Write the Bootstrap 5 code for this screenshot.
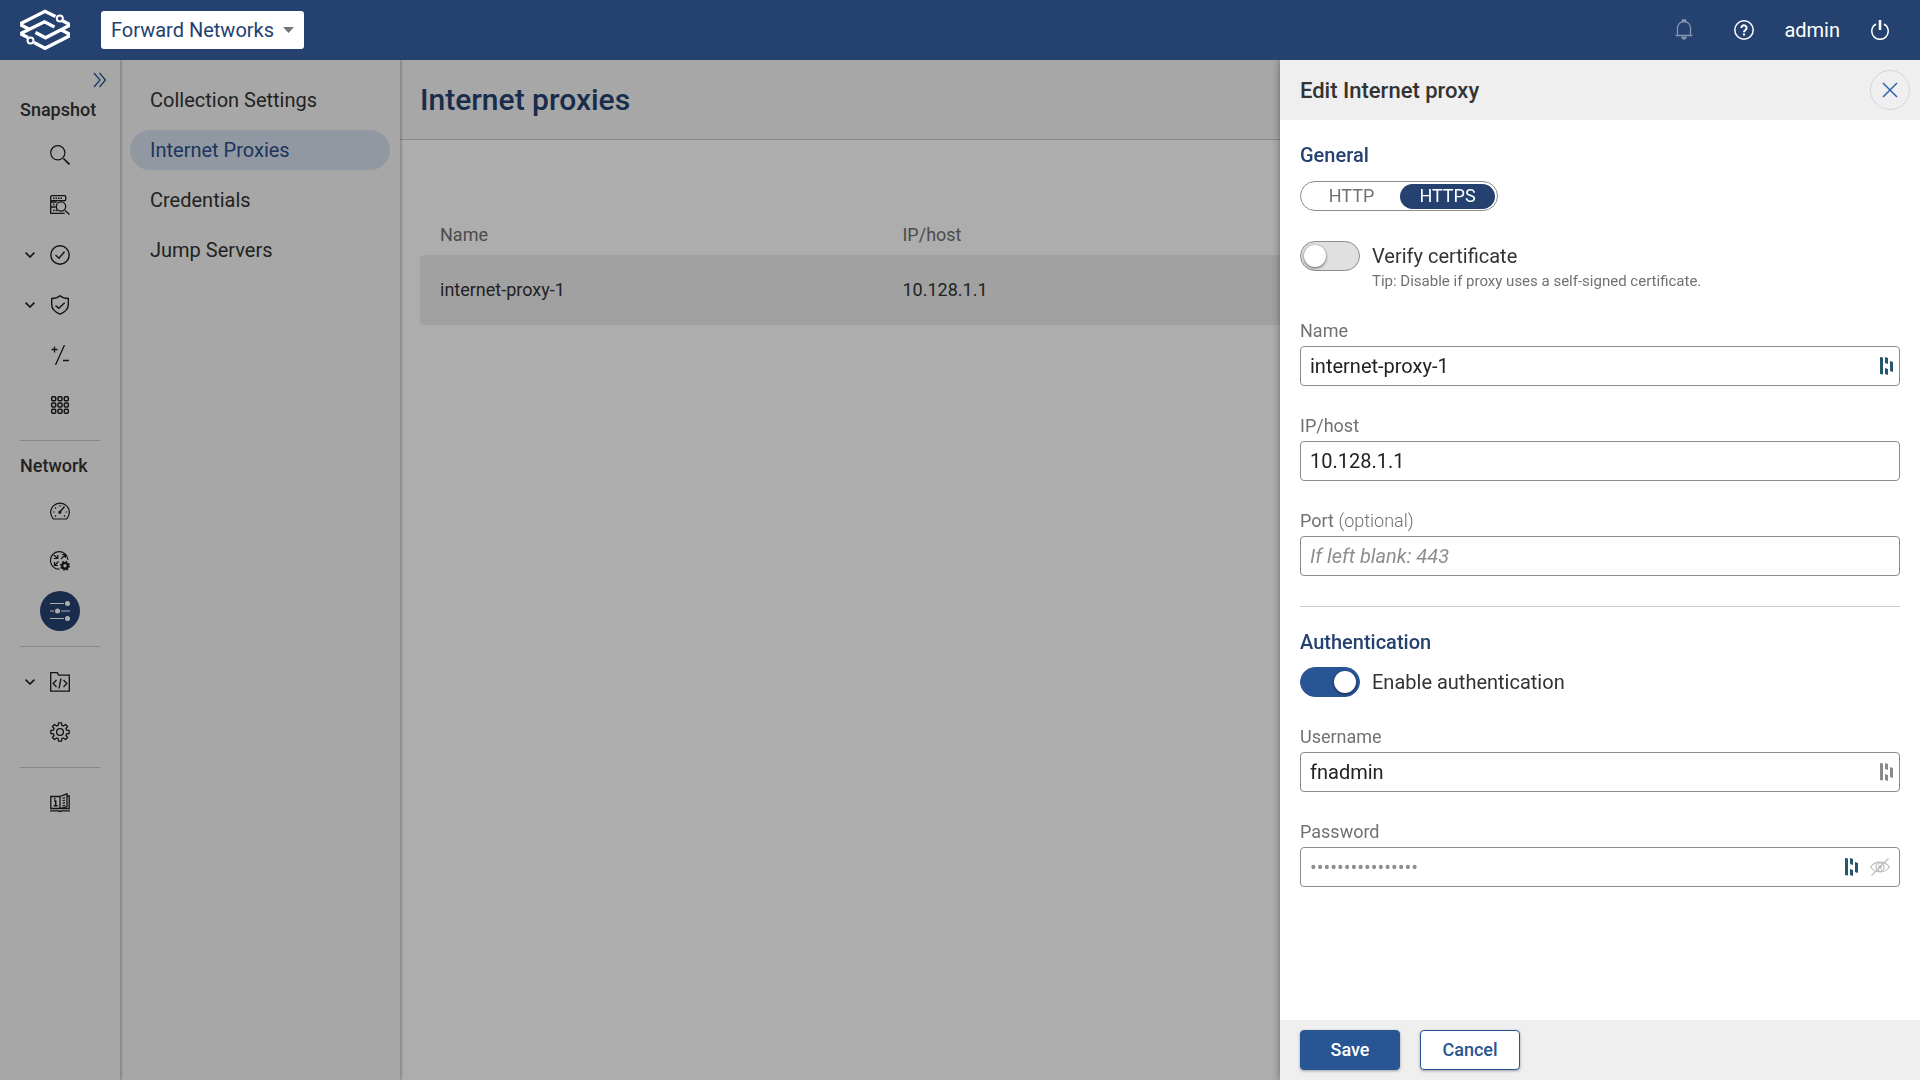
<!DOCTYPE html>
<html lang="en">
<head>
<meta charset="utf-8">
<meta name="viewport" content="width=device-width, initial-scale=1">
<title>Internet proxies</title>
<link href="https://cdn.jsdelivr.net/npm/bootstrap@5.3.0/dist/css/bootstrap.min.css" rel="stylesheet">
<style>
:root{--navy:#254170;--blue:#285593;--ink:#333;--soft:#717171}
body{font-family:Roboto,"Liberation Sans",sans-serif;font-size:20px;line-height:24px;color:var(--ink);background:#fff}
svg{display:block;fill:none;stroke:currentColor;flex:none}
.topbar{height:60px;background:var(--navy);color:#fff;padding:0 30px 0 20px;z-index:1050}
.net-select{width:203px;height:38px;margin-left:31px;border:0;border-radius:3px;color:var(--navy);font-size:20px;padding:0 28px 0 10px;
 background:#fff url("data:image/svg+xml,%3Csvg xmlns='http://www.w3.org/2000/svg' viewBox='0 0 11 6'%3E%3Cpath d='M0 0h11L5.5 6z' fill='%23757575'/%3E%3C/svg%3E") no-repeat right 10px center/11px 6px}
.bar-tools{gap:30px}
.bar-btn{background:none;border:0;padding:0;color:#fff;line-height:24px}
.bar-btn.quiet{opacity:.45;margin-right:10px}
.rail{width:120px;background:#f7f7f7;box-shadow:1px 0 3px rgba(0,0,0,.3);z-index:2}
.rail-toggle{height:40px;padding:0 13px 0 0;background:none;border:0;color:var(--blue)}
.rail-title{height:20px;line-height:20px;font-size:18px;font-weight:500;padding-left:20px;margin:0 0 10px;color:var(--ink)}
.rail a{height:50px;color:#1c1c1c;text-decoration:none;padding-left:25px;display:flex;align-items:center}
.rail .twist{width:10px;margin-right:10px}
.rail .glyph{width:40px;height:40px;display:grid;place-items:center;margin-left:-5px;border-radius:50%}
.rail .current .glyph{background:var(--navy);color:#fff}
.rail hr{margin:10px 20px;border-top:1px solid #c8c8c8;opacity:1}
.rail hr + .rail-title{margin-top:5px}
.subnav{width:280px;gap:10px;background:#f7f7f7;box-shadow:1px 0 3px rgba(0,0,0,.3);padding:20px 10px;z-index:1}
.subnav .nav-link{height:40px;line-height:40px;padding:0 20px;border-radius:20px;color:var(--ink)}
.subnav .nav-link.active{background:#d8e1ee;color:#2c4f88}
.page-head{height:80px;background:#f7f7f7;border-bottom:1px solid #ccc;padding:0 20px}
.page-head h1{font-size:30px;font-weight:500;color:var(--navy)}
.list-area{padding:75px 20px 20px}
.proxy-table{table-layout:fixed;font-size:18px;line-height:20px;border-collapse:separate;border-spacing:0;width:100%}
.proxy-table th{font-weight:400;color:#717171;padding:10px 20px}
.proxy-table td{background:#eee;height:70px;padding:0 20px}
.proxy-table td:first-child{border-radius:4px 0 0 4px}
.proxy-table td:last-child{border-radius:0 4px 4px 0}
.shade{background:rgba(0,0,0,.32);z-index:10}
.editor.offcanvas{top:60px;width:640px;max-width:100%;border:0;background:#fff;color:var(--ink);box-shadow:0 0 8px rgba(0,0,0,.4)}
.editor-head{height:60px;background:#efefef;padding:0 10px 0 20px}
.editor-head h2{font-size:22px;font-weight:500;line-height:25px}
.close-round{width:40px;height:40px;border:1px solid #d3d3df;border-radius:50%;background:none;color:#2f63b0;padding:0;display:grid;place-items:center}
.editor-body{padding:23px 20px}
.editor-body h3{font-size:20px;font-weight:500;line-height:24px;color:var(--navy);margin:0}
.scheme{height:30px;margin-top:14px;vertical-align:top;border:1px solid #8c8c8c;border-radius:15px;padding:1px 2px 0}
.scheme .btn{width:97px;height:25px;line-height:24px;font-size:18px;padding:0;border:0;border-radius:13px!important;color:var(--soft);margin:0!important;flex:none}
.scheme .btn-check:checked + .btn{background:var(--navy);color:#fff;width:95px}
.form-switch.toggle-row{padding:0;min-height:0;margin:0;gap:12px}
.form-switch.toggle-row.verify{margin:30px 0}
.form-switch.toggle-row.auth{margin:13px 0 30px}
.toggle-row .form-check-input{width:60px;height:30px;margin:0;float:none;border:1px solid #8c8c8c;border-radius:15px;background:#e0e0e0;flex:none;display:flex;align-items:center;padding:0 3px}
.toggle-row .form-check-input::before{content:"";width:22px;height:22px;border-radius:50%;background:#fff;box-shadow:0 1px 3px rgba(0,0,0,.6)}
.toggle-row .form-check-input:checked{background:var(--blue);border-color:var(--blue);justify-content:flex-end}
.verify-label{line-height:30px}
.tip{font-size:15px;line-height:20px;color:var(--soft)}
.field-label{font-size:18px;line-height:20px;margin:0 0 5px;display:block;color:var(--soft)}
.field{margin-bottom:30px}
.box{height:40px;border:1px solid #8c8c8c;border-radius:4px;background:#fff}
.box .form-control{border:0;background:none;padding:0 9px;font-size:20px;line-height:24px;height:38px;color:#222;box-shadow:none}
.box .form-control::placeholder{color:#8e8e8e;opacity:1}
.box .port::placeholder{font-style:italic}
.box svg{margin-right:6px}
.eye{background:none;border:0;padding:0 3px 0 6px;color:#bdbdbd}
.key{color:#26566d;fill:currentColor;stroke:none}
.key.dim{color:#8d8986}
.editor hr{margin:0 0 23px;border-top:1px solid #ccc;opacity:1}
.editor-foot{height:60px;background:#efefef;padding:0 20px;gap:20px}
.editor-foot .btn{width:100px;height:40px;font-size:18px;line-height:20px;font-weight:500;padding:0;border:1px solid var(--blue);border-radius:4px;box-shadow:0 1px 3px rgba(0,0,0,.35)}
.act-save{background:var(--blue);color:#fff}
.act-cancel{background:#fff;color:var(--blue)}
</style>
</head>
<body class="d-flex flex-column min-vh-100">
<header class="topbar d-flex align-items-center position-relative">
  <svg width="50" height="42" viewBox="0 0 50 42" stroke-width="3.4" role="img" aria-label="Forward Networks">
    <path d="M35.500 7.500 25 2.300 1.800 14V16.500L9.500 20.300"/><path d="M42 11.500 48.300 14.800V17L25.500 28.800 15.500 23.500"/>
    <path d="M8 28.500 1.800 25.500V24L24.500 12.800 34.500 18"/><path d="M40.500 20.500 48.300 24.500V27.500L25 39.300 14 33.500"/>
    <circle cx="39.800" cy="9.500" r="3" stroke-width="2"/><circle cx="10.500" cy="31.500" r="3" stroke-width="2"/>
  </svg>
  <select class="net-select form-select" aria-label="Network"><option>Forward Networks</option></select>
  <div class="bar-tools ms-auto d-flex align-items-center">
    <button class="bar-btn quiet" aria-label="Notifications"><svg width="20" height="22" viewBox="0 0 20 22" stroke-width="1.300"><path d="M1.500 16.500h17M3.500 16.500V9a6.500 6.500 0 0 1 13 0v7.500M8.500 2.500V1h3v1.500M8 18.500a2 1.500 0 0 0 4 0z"/></svg></button>
    <button class="bar-btn" aria-label="Help"><svg width="20" height="20" viewBox="0 0 20 20" stroke-width="1.500"><circle cx="10" cy="10" r="9.200"/><path d="M7.400 8a2.600 2.600 0 1 1 4 2.100C10.400 10.700 10 11 10 12.300M10 13.500v2" stroke-width="2"/></svg></button>
    <button class="bar-btn">admin</button>
    <button class="bar-btn" aria-label="Sign out"><svg width="20" height="20" viewBox="0 0 20 20" stroke-width="1.500"><path d="M6 4a8.200 8.200 0 1 0 8 0"/><path d="M10 0v10" stroke-width="2.600"/></svg></button>
  </div>
</header>
<div class="flex-grow-1 d-flex position-relative">
  <nav class="rail flex-shrink-0 d-flex flex-column" aria-label="Main">
    <button class="rail-toggle d-flex justify-content-end align-items-center" aria-label="Expand"><svg width="14" height="16" viewBox="0 0 14 16" stroke-width="1.300"><path d="M1 1l6 7-6 7M6.500 1l6 7-6 7"/></svg></button>
    <h2 class="rail-title">Snapshot</h2>
    <a href="#" aria-label="Search"><span class="twist"></span><span class="glyph"><svg width="20" height="20" viewBox="0 0 20 20" stroke-width="1.200"><circle cx="7.800" cy="7.800" r="7.100"/><path d="M13.500 13.500l6 6" stroke-width="1.700"/></svg></span></a>
    <a href="#" aria-label="Inventory search"><span class="twist"></span><span class="glyph"><svg width="20" height="20" viewBox="0 0 20 20" stroke-width="1.300"><rect x=".7" y=".7" width="15" height="5" rx="1"/><path d="M.7 5.700v12.600h14M.7 12h5M.7 7h6"/><path d="M3 3.200h10M3 9.500h2M3 15.500h4" stroke-width="1.500" stroke-dasharray="1.500 1"/><circle cx="11" cy="11.500" r="4.700"/><path d="M15 15.500l4.500 4"/></svg></span></a>
    <a href="#" aria-label="Verify"><span class="twist"><svg width="10" height="6" viewBox="0 0 10 6" stroke-width="1.600"><path d="M.6.600 5 5 9.400.600"/></svg></span><span class="glyph"><svg width="20" height="20" viewBox="0 0 20 20" stroke-width="1.400"><circle cx="10" cy="10" r="9.200"/><path d="M5.500 10l3.500 3.200 5.500-6.500"/></svg></span></a>
    <a href="#" aria-label="Security"><span class="twist"><svg width="10" height="6" viewBox="0 0 10 6" stroke-width="1.600"><path d="M.6.600 5 5 9.400.600"/></svg></span><span class="glyph"><svg width="20" height="20" viewBox="0 0 20 20" stroke-width="1.400"><path d="M10 .8C7.500 3 4.500 3.500 1.700 3.500v6.300c0 4.500 4.300 7.700 8.300 9.400 4-1.700 8.300-4.900 8.300-9.400V3.500C15.500 3.500 12.500 3 10 .8z"/><path d="M5.500 10.500l3.200 2.800 6-5.500"/></svg></span></a>
    <a href="#" aria-label="Diffs"><span class="twist"></span><span class="glyph"><svg width="20" height="20" viewBox="0 0 20 20" stroke-width="1.300"><path d="M14.500 0 5.500 20M1.500 4.500h6M4.500 1.500v6M13 15.500h6"/></svg></span></a>
    <a href="#" aria-label="Apps"><span class="twist"></span><span class="glyph"><svg width="20" height="20" viewBox="0 0 20 20" stroke-width="1.500"><g id="dots-row"><rect x="1.700" y="1.700" width="4" height="4" rx="1"/><rect x="8" y="1.700" width="4" height="4" rx="1"/><rect x="14.300" y="1.700" width="4" height="4" rx="1"/></g><use href="#dots-row" y="6.300"/><use href="#dots-row" y="12.600"/></svg></span></a>
    <hr>
    <h2 class="rail-title">Network</h2>
    <a href="#" aria-label="Dashboard"><span class="twist"></span><span class="glyph"><svg width="20" height="18" viewBox="0 0 20 18" stroke-width="1.200"><path d="M3.500 17A9.300 9.300 0 1 1 16.500 17z"/><path d="M9.500 10.500 14.500 4.500" stroke-width="1.400"/><circle cx="9.800" cy="10.300" r="1"/><path d="M3 10h1.500M15.500 10H17M5 5.500l1 1M10 3v1.500M5 14.500l1-1M15 14.500l-1-1"/></svg></span></a>
    <a href="#" aria-label="Network collection"><span class="twist"></span><span class="glyph"><svg width="20" height="20" viewBox="0 0 20 20" stroke-width="1.200"><path d="M18 9A8.800 8.800 0 1 0 9.500 18.200"/><path d="M3.800 4l4 3.500M7.800 4v3.500h-4M11 8l4.500-4.500M11.800 3.500h3.700V7M8.500 10.500l-4 4M4.500 11v3.500H8"/><circle cx="15" cy="14.800" r="2.800" stroke-width="2.200"/><circle cx="15" cy="14.800" r="4.200" stroke-width="1.600" stroke-dasharray="1.700 1.600"/></svg></span></a>
    <a href="#" class="current" aria-current="page" aria-label="Network settings"><span class="twist"></span><span class="glyph"><svg width="20" height="20" viewBox="0 0 20 20" stroke-width="1.200"><path d="M0 2.500h14M0 10h4M11 10h9M0 17.500h14"/><g fill="currentColor" stroke="none"><circle cx="17.500" cy="2.500" r="2.500"/><circle cx="7.500" cy="10" r="2.500"/><circle cx="17.500" cy="17.500" r="2.500"/></g></svg></span></a>
    <hr>
    <a href="#" aria-label="Code"><span class="twist"><svg width="10" height="6" viewBox="0 0 10 6" stroke-width="1.600"><path d="M.6.600 5 5 9.400.600"/></svg></span><span class="glyph"><svg width="20" height="20" viewBox="0 0 20 20" stroke-width="1.300"><path d="M.7.700h6.500l1.500 2.500h10.600v16H.7z"/><path d="M6.500 8l-3.300 3.500 3.300 3.500M13.500 8l3.300 3.500-3.300 3.500M11 6.500 9 16.500"/></svg></span></a>
    <a href="#" aria-label="Settings"><span class="twist"></span><span class="glyph"><svg width="20" height="20" viewBox="0 0 20 20" stroke-width="1.300" stroke-linejoin="round"><path d="M8.200 3.300 8.500.8h3l.3 2.500 1.700.7 2-1.600 2.100 2.100L16 6.500l.7 1.700 2.500.3v3l-2.500.3-.7 1.700 1.600 2-2.100 2.100-2-1.600-1.700.7-.3 2.500h-3l-.3-2.500-1.700-.7-2 1.600-2.100-2.100L4 13.500l-.7-1.700L.8 11.500v-3l2.500-.3L4 6.500l-1.600-2 2.100-2.100 2 1.600z"/><circle cx="10" cy="10" r="3.400"/></svg></span></a>
    <hr>
    <a href="#" aria-label="Documentation"><span class="twist"></span><span class="glyph"><svg width="20" height="20" viewBox="0 0 20 20" stroke-width="1.300"><path d="M10 3.500H.8v12H10l7-2V.8L10 3.500v12M17 3h2.200v12.500H11M0 17.800h8.500a2 2 0 0 0 3 0H20"/><path d="M4 8h1.700v4.500M3.700 12.700h4M4.800 5v1.500" stroke-width="1.500"/><path d="M12.500 5.500l2.500-1M12.500 8l2.500-1M12.500 10.500l2.500-1M12.500 13l2.500-1"/></svg></span></a>
  </nav>
  <nav class="subnav nav flex-column flex-nowrap flex-shrink-0" aria-label="Network settings">
    <a class="nav-link" href="#">Collection Settings</a>
    <a class="nav-link active" href="#">Internet Proxies</a>
    <a class="nav-link" href="#">Credentials</a>
    <a class="nav-link" href="#">Jump Servers</a>
  </nav>
  <main class="flex-grow-1">
    <div class="page-head d-flex align-items-center"><h1 class="m-0">Internet proxies</h1></div>
    <div class="list-area">
      <table class="proxy-table">
        <colgroup><col style="width:31.25%"><col></colgroup>
        <thead><tr><th scope="col">Name</th><th scope="col">IP/host</th></tr></thead>
        <tbody><tr><td>internet-proxy-1</td><td>10.128.1.1</td></tr></tbody>
      </table>
    </div>
  </main>
  <div class="shade position-absolute top-0 start-0 w-100 h-100"></div>
</div>
<aside class="editor offcanvas offcanvas-end show" data-bs-backdrop="false" data-bs-scroll="true" tabindex="-1" aria-labelledby="edit-title">
  <div class="editor-head d-flex align-items-center justify-content-between flex-shrink-0">
    <h2 class="m-0" id="edit-title">Edit Internet proxy</h2>
    <button class="close-round" aria-label="Close" data-bs-dismiss="offcanvas"><svg width="16" height="16" viewBox="0 0 16 16" stroke-width="1.500"><path d="M1 1l14 14M15 1 1 15"/></svg></button>
  </div>
  <form class="editor-body flex-grow-1 overflow-auto">
    <h3>General</h3>
    <div class="scheme d-inline-flex align-items-center" role="group" aria-label="Scheme">
      <input type="radio" class="btn-check" name="scheme" id="http"><label class="btn" for="http">HTTP</label>
      <input type="radio" class="btn-check" name="scheme" id="https" checked><label class="btn" for="https">HTTPS</label>
    </div>
    <div class="form-check form-switch toggle-row verify d-flex">
      <input class="form-check-input" type="checkbox" role="switch" id="verify">
      <div><label class="verify-label d-block" for="verify">Verify certificate</label><div class="tip">Tip: Disable if proxy uses a self-signed certificate.</div></div>
    </div>
    <div class="field"><label class="field-label" for="name">Name</label>
      <div class="box d-flex align-items-center"><input class="form-control" id="name" value="internet-proxy-1"><svg class="key" width="13" height="18" viewBox="0 0 13 18"><path d="M0 0l3 .6v17l-3-.6zM5 0l3 1v6L5 6zM5 11l3 1v6l-3-1zM10 4l3 1v10l-3-1z"/></svg></div></div>
    <div class="field"><label class="field-label" for="host">IP/host</label>
      <div class="box d-flex align-items-center"><input class="form-control" id="host" value="10.128.1.1"></div></div>
    <div class="field"><label class="field-label" for="port">Port <span class="fw-light">(optional)</span></label>
      <div class="box d-flex align-items-center"><input class="form-control port" id="port" placeholder="If left blank: 443"></div></div>
    <hr>
    <h3>Authentication</h3>
    <div class="form-check form-switch toggle-row auth d-flex align-items-center">
      <input class="form-check-input" type="checkbox" role="switch" id="auth" checked>
      <label for="auth">Enable authentication</label>
    </div>
    <div class="field"><label class="field-label" for="user">Username</label>
      <div class="box d-flex align-items-center"><input class="form-control" id="user" value="fnadmin"><svg class="key dim" width="13" height="18" viewBox="0 0 13 18"><path d="M0 0l3 .6v17l-3-.6zM5 0l3 1v6L5 6zM5 11l3 1v6l-3-1zM10 4l3 1v10l-3-1z"/></svg></div></div>
    <div class="field"><label class="field-label" for="pass">Password</label>
      <div class="box d-flex align-items-center"><input class="form-control" type="password" id="pass" placeholder="••••••••••••••••"><svg class="key" width="13" height="18" viewBox="0 0 13 18"><path d="M0 0l3 .6v17l-3-.6zM5 0l3 1v6L5 6zM5 11l3 1v6l-3-1zM10 4l3 1v10l-3-1z"/></svg><button type="button" class="eye" aria-label="Show password"><svg width="20" height="20" viewBox="0 0 20 20" stroke-width="1.200"><path d="M.6 10C5 3.500 15 3.500 19.400 10 15 16.500 5 16.500.6 10zM1.500 18.500l17-17"/><circle cx="10" cy="10" r="4"/><circle cx="10" cy="10" r="1.300"/></svg></button></div></div>
  </form>
  <div class="editor-foot d-flex align-items-center flex-shrink-0">
    <button class="btn act-save">Save</button><button class="btn act-cancel">Cancel</button>
  </div>
</aside>
<script src="https://cdn.jsdelivr.net/npm/bootstrap@5.3.0/dist/js/bootstrap.bundle.min.js"></script>
</body>
</html>
